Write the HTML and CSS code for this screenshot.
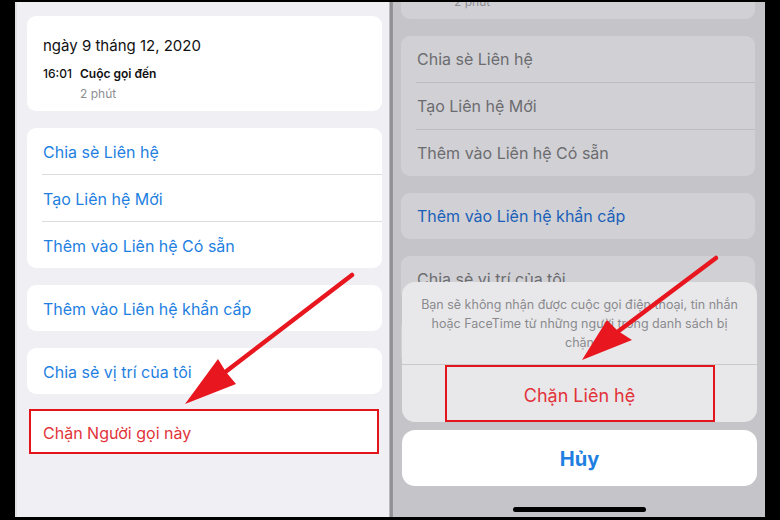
FILE: index.html
```html
<!DOCTYPE html>
<html lang="vi">
<head>
<meta charset="utf-8">
<link rel="stylesheet" href="styles.css">
</head>
<body>
<div class="frame">
  <section class="screen screen-left">
    <div class="card info">
      <div class="date">ngày 9 tháng 12, 2020</div>
      <div class="call"><span class="time">16:01</span><span class="kind">Cuộc gọi đến</span></div>
      <div class="dur">2 phút</div>
    </div>
    <div class="card">
      <div class="row">Chia sè Liên hệ</div>
      <div class="sep"></div>
      <div class="row">Tạo Liên hệ Mới</div>
      <div class="sep"></div>
      <div class="row">Thêm vào Liên hệ Có sẵn</div>
    </div>
    <div class="card"><div class="row">Thêm vào Liên hệ khẩn cấp</div></div>
    <div class="card"><div class="row">Chia sẻ vị trí của tôi</div></div>
    <div class="block-box"><div class="row danger">Chặn Người gọi này</div></div>
  </section>

  <div class="divider"></div>

  <section class="screen screen-right">
    <div class="card info shifted">
      <div class="date">ngày 9 tháng 12, 2020</div>
      <div class="call"><span class="time">16:01</span><span class="kind">Cuộc gọi đến</span></div>
      <div class="dur">2 phút</div>
    </div>
    <div class="card">
      <div class="row">Chia sè Liên hệ</div>
      <div class="sep"></div>
      <div class="row">Tạo Liên hệ Mới</div>
      <div class="sep"></div>
      <div class="row">Thêm vào Liên hệ Có sẵn</div>
    </div>
    <div class="card"><div class="row link">Thêm vào Liên hệ khẩn cấp</div></div>
    <div class="card"><div class="row">Chia sẻ vị trí của tôi</div></div>
    <div class="card"><div class="row">Mở</div></div>

    <div class="sheet-wrap">
      <div class="sheet">
        <p class="msg">Bạn sẽ không nhận được cuộc gọi điện thoại, tin nhắn hoặc FaceTime từ những người trong danh sách bị chặn</p>
        <div class="sheet-sep"></div>
        <div class="sheet-action"><span class="action-box">Chặn Liên hệ</span></div>
      </div>
      <div class="cancel">Hủy</div>
    </div>
    <div class="home-bar"></div>
  </section>

  <svg class="arrows" width="780" height="520" viewBox="0 0 780 520">
    <line x1="352" y1="275" x2="224" y2="373" stroke="#e8161e" stroke-width="4.5" stroke-linecap="round"/>
    <polygon points="185,404 218,359 226,372 236,384" fill="#e8161e"/>
    <line x1="716" y1="258" x2="616" y2="333" stroke="#e8161e" stroke-width="4.5" stroke-linecap="round"/>
    <polygon points="582,360 607,320 618,331 632,340" fill="#e8161e"/>
  </svg>
</div>
</body>
</html>
```
FILE: styles.css
```css
html, body {
  margin: 0;
  padding: 0;
  background: #000;
}
body {
  font-family: Inter, "Noto Sans", "Liberation Sans", sans-serif;
  width: 780px;
  height: 520px;
  overflow: hidden;
}
.frame {
  position: relative;
  width: 780px;
  height: 520px;
  display: flex;
  padding-top: 2px;
  box-sizing: border-box;
}
.screen {
  height: 515px;
  display: flex;
  flex-direction: column;
  overflow: hidden;
  box-sizing: border-box;
  position: relative;
}
.screen-left {
  margin-left: 15px;
  width: 374px;
  background: #efeff4;
  border-left: 2px solid #e2e2e6;
  padding: 14px 7px 0 10px;
  gap: 17px;
}
.divider {
  width: 4px;
  height: 515px;
  background: linear-gradient(90deg, #d0d0d4, #8c8c90 40%, #9a9a9e);
}
.screen-right {
  width: 372px;
  background: #c5c5c9;
  padding: 0 10px 0 8px;
  gap: 17px;
}
.card {
  background: #fff;
  border-radius: 9px;
  display: flex;
  flex-direction: column;
  flex-shrink: 0;
}
.screen-right .card {
  background: #d1d1d5;
}
.info {
  padding: 20px 16px 9px;
}
.shifted {
  margin-top: -78px;
}
.date {
  font-size: 15px;
  line-height: 20px;
  color: #111;
}
.call {
  margin-top: 10px;
  font-size: 12px;
  line-height: 16px;
  color: #111;
  display: flex;
}
.time {
  width: 37px;
  font-weight: 500;
}
.kind {
  font-weight: 600;
}
.dur {
  margin-top: 4px;
  margin-left: 37px;
  font-size: 12px;
  line-height: 16px;
  color: #8e8e93;
}
.row {
  height: 46px;
  display: flex;
  align-items: center;
  padding-left: 16px;
  padding-top: 1px;
  box-sizing: border-box;
  font-size: 16px;
  color: #1f7fe1;
  flex-shrink: 0;
}
.screen-right .row {
  color: #6c6c70;
  padding-top: 0;
}
.screen-right .row.link {
  color: #1b60b8;
}
.sep {
  height: 1px;
  margin-left: 15px;
  background: #dcdce0;
}
.screen-right .sep {
  background: #bdbdc1;
}
.block-box {
  margin: -2px 3px 0 2px;
  border: 2px solid #e3141c;
  background: #fff;
  height: 45px;
  box-sizing: border-box;
  display: flex;
  align-items: center;
  flex-shrink: 0;
}
.block-box .row {
  height: 41px;
  padding-left: 12px;
  padding-top: 3px;
}
.row.danger {
  color: #e2333a;
}
.sheet-wrap {
  position: absolute;
  left: 9px;
  right: 8px;
  top: 280px;
  display: flex;
  flex-direction: column;
  gap: 8px;
}
.sheet {
  background: #e8e8ea;
  border-radius: 13px;
  display: flex;
  flex-direction: column;
}
.msg {
  margin: 0;
  padding: 13px 14px 12px;
  font-size: 12.5px;
  line-height: 19px;
  color: #8a8a8e;
  text-align: center;
}
.sheet-sep {
  height: 1px;
  background: #c9c9cd;
}
.sheet-action {
  height: 57px;
  display: flex;
  justify-content: center;
  align-items: flex-start;
}
.action-box {
  width: 266px;
  height: 50px;
  padding-top: 3px;
  border: 2px solid #e3141c;
  display: flex;
  align-items: center;
  justify-content: center;
  font-size: 18px;
  color: #e2333a;
}
.cancel {
  background: #fff;
  border-radius: 13px;
  height: 56px;
  padding-top: 2px;
  box-sizing: border-box;
  display: flex;
  align-items: center;
  justify-content: center;
  font-size: 20px;
  font-weight: 700;
  color: #1f7fe1;
}
.home-bar {
  position: absolute;
  left: 120px;
  top: 505px;
  width: 133px;
  height: 5px;
  border-radius: 3px;
  background: #000;
}
.arrows {
  position: absolute;
  left: 0;
  top: 0;
  pointer-events: none;
}
```
